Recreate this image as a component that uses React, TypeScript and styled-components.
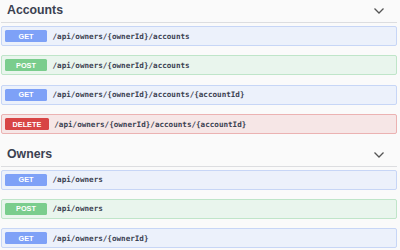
import React from "react";
import styled, { createGlobalStyle } from "styled-components";

const GlobalStyle = createGlobalStyle`
  html, body {
    margin: 0;
    padding: 0;
    background: #fafafa;
  }
  body {
    font-family: "Liberation Sans", Arial, sans-serif;
    overflow: hidden;
  }
`;

type Method = "get" | "post" | "delete";

const colors: Record<Method, { badge: string; bg: string; border: string }> = {
  get: { badge: "#7ea1f7", bg: "#ecf1fb", border: "#c7d6f6" },
  post: { badge: "#7acd8d", bg: "#e9f5ed", border: "#bfe5c9" },
  delete: { badge: "#d84545", bg: "#f6e6e6", border: "#ebb2b2" },
};

const Page = styled.div`
  width: 400px;
  height: 250px;
  padding: 0 3px 0 1px;
  box-sizing: border-box;
  overflow: hidden;
`;

const Section = styled.section`
  margin-bottom: 6.5px;
`;

const TagHeader = styled.div`
  display: flex;
  align-items: center;
  justify-content: space-between;
  height: 22px;
  padding: 0 12px 0 6px;
  border-bottom: 1px solid #dcdde0;
  margin-bottom: 3px;
  color: #3b4151;
`;

const TagTitle = styled.h3`
  margin: 0;
  font-size: 12.3px;
  font-weight: 700;
  line-height: 18px;
  position: relative;
  top: -1px;
`;

const Chevron = styled.svg`
  width: 12px;
  height: 8px;
`;

const Row = styled.div<{ $m: Method }>`
  display: flex;
  align-items: center;
  height: 20px;
  box-sizing: border-box;
  padding: 0 3px;
  margin-bottom: 9.4px;
  background: ${(p) => colors[p.$m].bg};
  border: 1px solid ${(p) => colors[p.$m].border};
  border-radius: 2px;
`;

const Badge = styled.span<{ $m: Method }>`
  min-width: 42px;
  height: 12px;
  padding: 0 7.5px;
  box-sizing: border-box;
  display: flex;
  align-items: center;
  justify-content: center;
  background: ${(p) => colors[p.$m].badge};
  color: #fff;
  font-size: 7.3px;
  font-weight: 700;
  border-radius: 1.5px;
  margin-right: 5.5px;
`;

const Path = styled.span`
  font-family: "DejaVu Sans Mono", "Liberation Mono", monospace;
  font-size: 7.6px;
  font-weight: 600;
  color: #3b4151;
`;

const sections: { name: string; ops: [Method, string][] }[] = [
  {
    name: "Accounts",
    ops: [
      ["get", "/api/owners/{ownerId}/accounts"],
      ["post", "/api/owners/{ownerId}/accounts"],
      ["get", "/api/owners/{ownerId}/accounts/{accountId}"],
      ["delete", "/api/owners/{ownerId}/accounts/{accountId}"],
    ],
  },
  {
    name: "Owners",
    ops: [
      ["get", "/api/owners"],
      ["post", "/api/owners"],
      ["get", "/api/owners/{ownerId}"],
    ],
  },
];

const App = () => {
  return (
    <>
      <GlobalStyle />
      <Page>
        {sections.map((s) => (
          <Section key={s.name}>
            <TagHeader>
              <TagTitle>{s.name}</TagTitle>
              <Chevron viewBox="0 0 12 8">
                <path d="M1.5 1.5 L6 6 L10.5 1.5" fill="none" stroke="#555" strokeWidth="1.3" />
              </Chevron>
            </TagHeader>
            {s.ops.map(([m, p], i) => (
              <Row key={i} $m={m}>
                <Badge $m={m}>{m.toUpperCase()}</Badge>
                <Path>{p}</Path>
              </Row>
            ))}
          </Section>
        ))}
      </Page>
    </>
  );
};

export default App;
